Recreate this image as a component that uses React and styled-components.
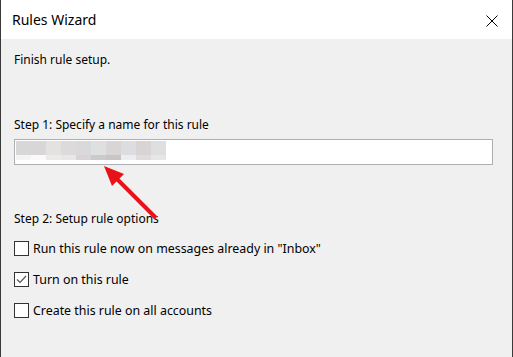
import React from "react";
import styled, { createGlobalStyle } from "styled-components";

const GlobalStyle = createGlobalStyle`
  html, body {
    margin: 0;
    padding: 0;
    background: #f0f0f0;
  }
  body {
    font-family: "Noto Sans", "Open Sans", "Liberation Sans", sans-serif;
    color: #000;
  }
`;

const Window = styled.div`
  position: relative;
  width: 513px;
  height: 357px;
  box-sizing: border-box;
  border-left: 1px solid #3a3a3a;
  border-right: 1px solid #3a3a3a;
  background: #f0f0f0;
  overflow: hidden;
  display: flex;
  flex-direction: column;
`;

const TitleBar = styled.div`
  height: 39px;
  background: #fff;
  display: flex;
  align-items: center;
  justify-content: space-between;
  padding: 0 14px 0 11px;
  flex-shrink: 0;
`;

const Title = styled.span`
  font-size: 14px;
  margin-top: 0;
`;

const Close = styled.span`
  display: flex;
  width: 12px;
  height: 12px;
  margin-top: 2px;
`;

const Body = styled.div`
  padding: 13px 13px 0 13px;
  display: flex;
  flex-direction: column;
  font-size: 12px;
  line-height: 16px;
`;

const Text = styled.div`
  margin-top: ${(p) => p.$gap || 0}px;
`;

const NameField = styled.div`
  margin-top: 6px;
  width: 479px;
  height: 26px;
  box-sizing: border-box;
  border: 1px solid #adadb4;
  background: #fff;
  padding: 1px 0 0 1px;
  display: flex;
`;

const Blur = styled.div`
  display: grid;
  grid-template-columns: repeat(10, 15px);
  grid-template-rows: 14px 5px;
`;

const Cell = styled.div`
  background: ${(p) => p.$c};
`;

const Options = styled.div`
  margin-top: 14px;
  display: flex;
  flex-direction: column;
  gap: 16px;
  font-size: 12.4px;
`;

const Option = styled.label`
  display: flex;
  align-items: center;
  gap: 4px;
  height: 15px;
`;

const Box = styled.span`
  width: 15px;
  height: 15px;
  box-sizing: border-box;
  border: 1px solid #333;
  background: #fff;
  display: flex;
  align-items: center;
  justify-content: center;
  flex-shrink: 0;
`;

const Arrow = styled.svg`
  position: absolute;
  left: 0;
  top: 0;
  pointer-events: none;
`;

const top = ["#d7d7d7", "#d8d6d6", "#e3e2e0", "#dcdadb", "#d9d9dc", "#dee0df", "#d8d5d6", "#dddcdf", "#d8d4d5", "#dedfe0"];
const bottom = ["#f4f4f4", "#fafafa", "#eaeaea", "#e8e6e6", "#d9d3d5", "#c8cbce", "#c9c5c3", "#ececf1", "#dfdcdd", "#e6e6e6"];

const options = [
  { text: 'Run this rule now on messages already in "Inbox"', checked: false },
  { text: "Turn on this rule", checked: true },
  { text: "Create this rule on all accounts", checked: false },
];

export default function App() {
  return (
    <>
      <GlobalStyle />
      <Window>
        <TitleBar>
          <Title>Rules Wizard</Title>
          <Close>
            <svg width="12" height="12" viewBox="0 0 12 12">
              <path d="M0.5 0.5L11.5 11.5M11.5 0.5L0.5 11.5" stroke="#000" strokeWidth="1" />
            </svg>
          </Close>
        </TitleBar>
        <Body>
          <Text>Finish rule setup.</Text>
          <Text $gap={49}>Step 1: Specify a name for this rule</Text>
          <NameField>
            <Blur>
              {top.map((c, i) => (
                <Cell key={"t" + i} $c={c} />
              ))}
              {bottom.map((c, i) => (
                <Cell key={"b" + i} $c={c} />
              ))}
            </Blur>
          </NameField>
          <Text $gap={46}>Step 2: Setup rule options</Text>
          <Options>
            {options.map((o) => (
              <Option key={o.text}>
                <Box>
                  {o.checked && (
                    <svg width="11" height="9" viewBox="0 0 11 9">
                      <path d="M1 4.5L4 7.5L10 1" fill="none" stroke="#555" strokeWidth="1.2" />
                    </svg>
                  )}
                </Box>
                {o.text}
              </Option>
            ))}
          </Options>
        </Body>
        <Arrow width="513" height="357" viewBox="0 0 513 357">
          <line x1="155" y1="218" x2="114" y2="177" stroke="#e8131a" strokeWidth="4" />
          <polygon points="103,166 123,174 111,186" fill="#e8131a" />
        </Arrow>
      </Window>
    </>
  );
}
